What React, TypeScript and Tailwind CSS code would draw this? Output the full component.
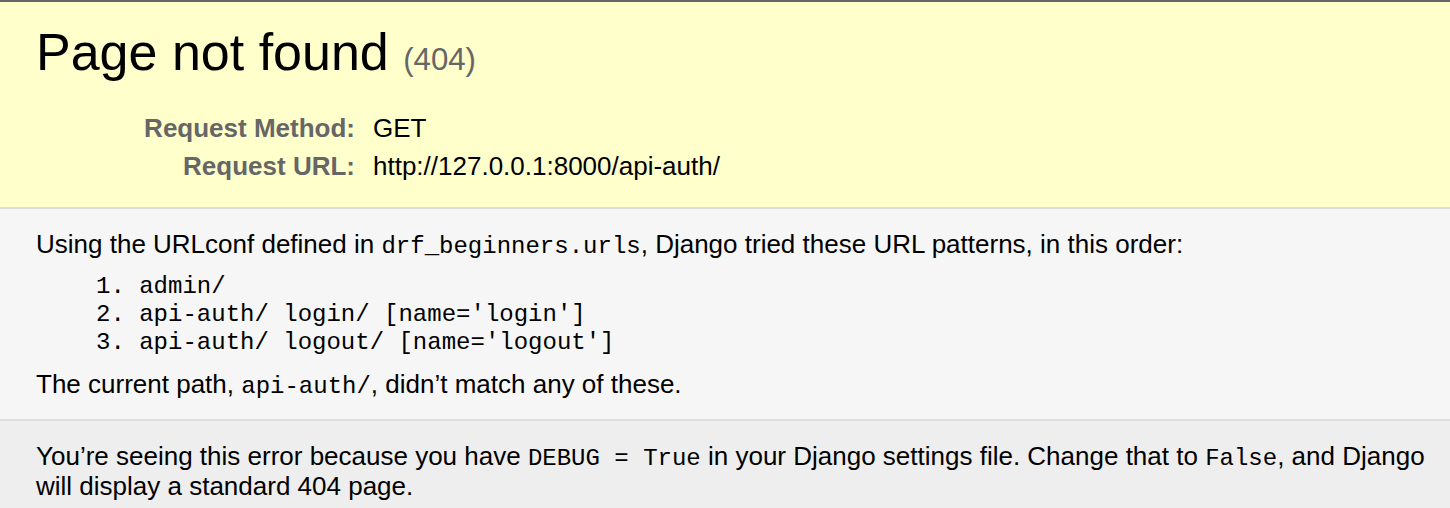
import React from 'react';

const patterns = [
  "admin/",
  "api-auth/ login/ [name='login']",
  "api-auth/ logout/ [name='logout']",
];

const Code: React.FC<{ children: React.ReactNode }> = ({ children }) => (
  <code className="font-['Liberation_Mono',Courier,monospace] text-[24px] leading-none">{children}</code>
);

export default function App() {
  return (
    <div className="min-h-[508px] bg-[#eee] border-t-2 border-[#666] font-['Liberation_Sans',Arial,sans-serif] text-black">
      {/* Summary */}
      <div className="bg-[#ffc] border-b-2 border-[#ddd] px-[36px] pt-[22px] pb-[22px]">
        <h1 className="text-[52px] leading-[56px] font-normal">
          Page not found <span className="text-[31.2px] text-[#666]">(404)</span>
        </h1>
        <div className="mt-[21px] grid grid-cols-[319px_1fr] gap-x-[18px] text-[26px] leading-[30px]">
          <div className="py-[4px] text-right font-bold text-[#666]">Request Method:</div>
          <div className="py-[4px]">GET</div>
          <div className="py-[4px] text-right font-bold text-[#666]">Request URL:</div>
          <div className="py-[4px]">http://127.0.0.1:8000/api-auth/</div>
        </div>
      </div>

      {/* Info */}
      <div className="bg-[#f6f6f6] border-b-2 border-[#ddd] px-[36px] pt-[20px] pb-[20px] text-[26px] leading-[30px]">
        <p>
          Using the URLconf defined in <Code>drf_beginners.urls</Code>, Django tried these URL patterns, in this order:
        </p>
        <ol className="mt-[14px] mb-[12px] pl-[60px] font-['Liberation_Mono',Courier,monospace] text-[24px] leading-[28px]">
          {patterns.map((p, i) => (
            <li key={i} className="whitespace-pre">
              {i + 1}. {p}
            </li>
          ))}
        </ol>
        <p>
          The current path, <Code>api-auth/</Code>, didn’t match any of these.
        </p>
      </div>

      {/* Explanation */}
      <div className="pl-[36px] pr-[12px] pt-[20px] pb-[15px] text-[26px] leading-[30px]">
        <p>
          You’re seeing this error because you have <Code>DEBUG = True</Code> in your Django settings file. Change that to{' '}
          <Code>False</Code>, and Django
          <br />
          will display a standard 404 page.
        </p>
      </div>
    </div>
  );
}
